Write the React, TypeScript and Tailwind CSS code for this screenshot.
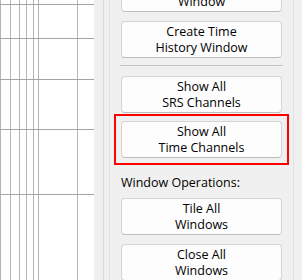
const xs = [0, 10, 19, 26, 33, 38, 77];
const ys = [4, 38, 79, 129, 194];

const Plot = () => (
  <svg width="94" height="280" className="shrink-0 bg-white">
    {xs.map((x) => (
      <line key={"v" + x} x1={x + 0.5} y1={0} x2={x + 0.5} y2={280} stroke="#b4b4b4" strokeWidth={1} />
    ))}
    {ys.map((y) => (
      <line key={"h" + y} x1={0} y1={y + 0.5} x2={94} y2={y + 0.5} stroke="#a4a4a4" strokeWidth={1} />
    ))}
  </svg>
);

const Btn = ({ lines, className = "" }: { lines: string[]; className?: string }) => (
  <button
    className={
      "w-[161px] h-[37px] shrink-0 flex flex-col items-center justify-center rounded-[4px] border border-[#d4d4d4] border-b-[#bcbcbc] bg-[#fdfdfd] text-[12.5px] leading-[16px] text-black " +
      className
    }
  >
    {lines.map((l) => (
      <span key={l}>{l}</span>
    ))}
  </button>
);

export default function App() {
  return (
    <div
      className="w-[302px] h-[280px] flex overflow-hidden bg-[#f0f0f0]"
      style={{ fontFamily: '"Open Sans", "Noto Sans", sans-serif' }}
    >
      <Plot />
      <div className="w-[10px] shrink-0 border-r border-[#d9d9d9]" />
      <div className="w-[5px] shrink-0" />
      <div className="w-[185px] shrink-0 h-full border-x border-[#e2e2e2] px-[11px] flex flex-col">
        <Btn lines={["Show Time", "Window"]} className="-mt-[25px]" />
        <Btn lines={["Create Time", "History Window"]} className="mt-[9px]" />
        <div className="mt-[7px] -mx-[1px] h-px shrink-0 bg-[#c4c4c4]" />
        <Btn lines={["Show All", "SRS Channels"]} className="mt-[10px]" />
        <div className="relative mt-[8px] shrink-0">
          <Btn lines={["Show All", "Time Channels"]} />
          <div className="absolute -inset-[7px] border-2 border-[#ff0000]" />
        </div>
        <div className="mt-[17px] shrink-0 text-[12.5px] leading-[16px] text-black">Window Operations:</div>
        <Btn lines={["Tile All", "Windows"]} className="mt-[7px]" />
        <Btn lines={["Close All", "Windows"]} className="mt-[9px]" />
      </div>
    </div>
  );
}
